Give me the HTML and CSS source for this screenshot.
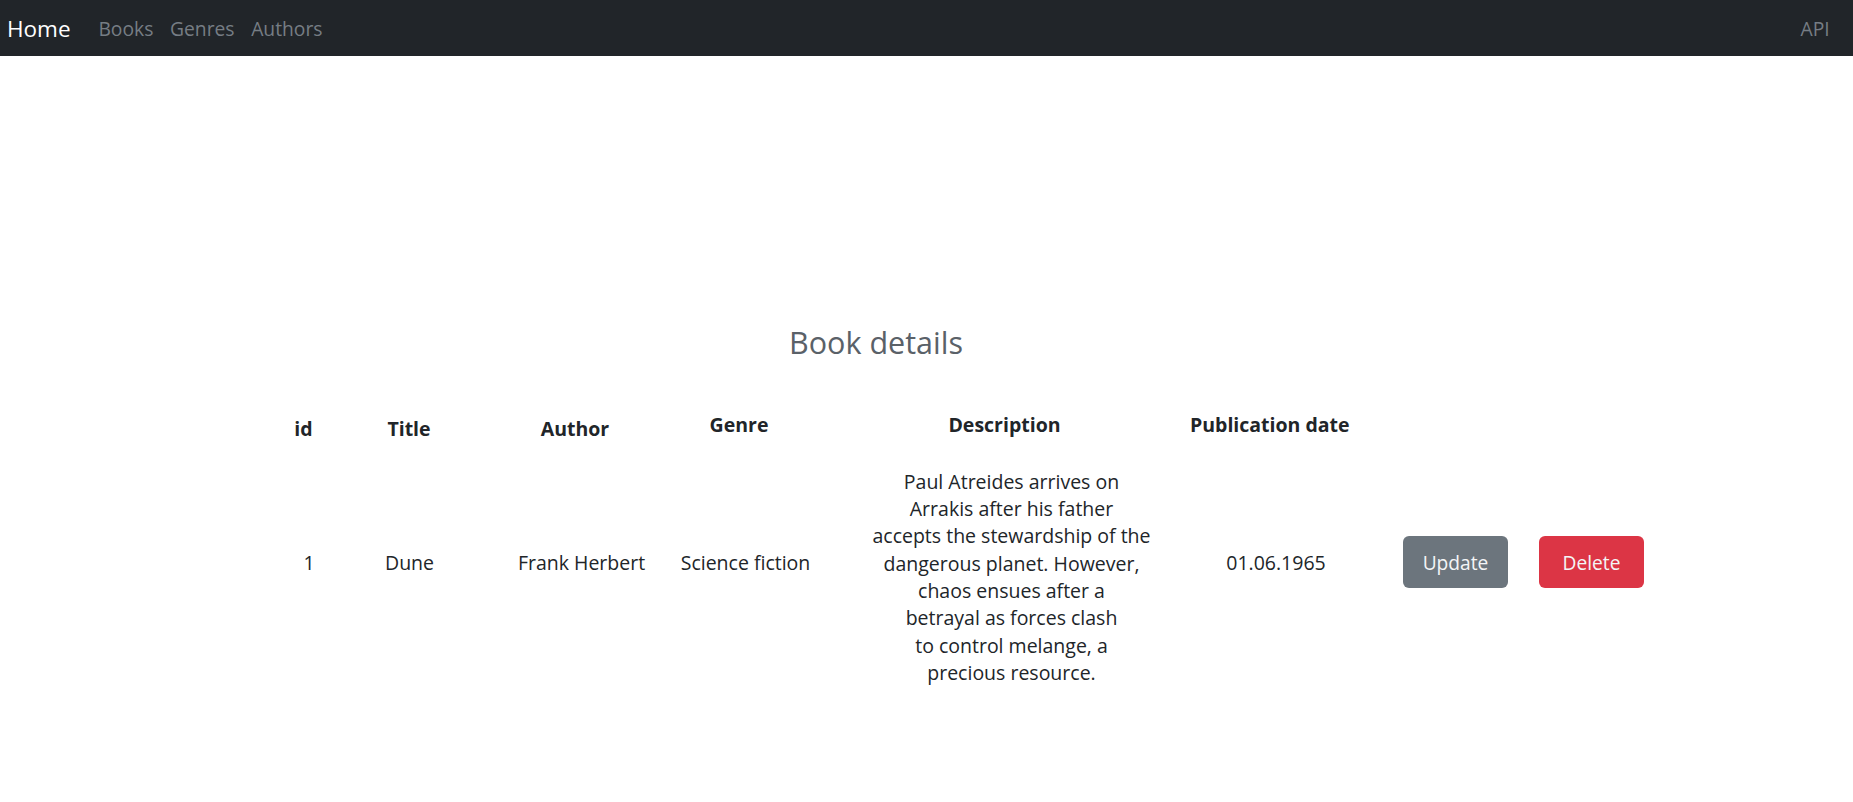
FILE: index.html
```html
<!DOCTYPE html>
<html lang="en">
<head>
<meta charset="utf-8">
<title>Book details</title>
<link rel="stylesheet" href="styles.css">
</head>
<body>
<nav class="navbar">
  <a class="brand" href="#">Home</a>
  <ul class="nav">
    <li><a class="nav-link" href="#">Books</a></li>
    <li><a class="nav-link" href="#">Genres</a></li>
    <li><a class="nav-link" href="#">Authors</a></li>
  </ul>
  <ul class="nav nav-right">
    <li><a class="nav-link" href="#">API</a></li>
  </ul>
</nav>
<main class="page-main">
  <section class="details">
    <h3 class="title">Book details</h3>
    <div class="head-row">
      <div class="th th-low">id</div>
      <div class="th th-low">Title</div>
      <div class="th th-low">Author</div>
      <div class="th">Genre</div>
      <div class="th">Description</div>
      <div class="th">Publication date</div>
    </div>
    <div class="data-row">
      <div class="td">1</div>
      <div class="td">Dune</div>
      <div class="td">Frank Herbert</div>
      <div class="td">Science fiction</div>
      <div class="td td-desc">Paul Atreides arrives on<br>Arrakis after his father<br>accepts the stewardship of the<br>dangerous planet. However,<br>chaos ensues after a<br>betrayal as forces clash<br>to control melange, a<br>precious resource.</div>
      <div class="td">01.06.1965</div>
      <div class="td-actions">
        <button class="btn btn-secondary" type="button">Update</button>
        <button class="btn btn-danger" type="button">Delete</button>
      </div>
    </div>
  </section>
</main>
</body>
</html>
```

FILE: styles.css
```css
* { box-sizing: border-box; }

html, body {
  margin: 0;
  padding: 0;
  background: #ffffff;
}

body {
  font-family: "Open Sans", "Noto Sans", sans-serif;
  color: #212529;
}

.navbar {
  display: flex;
  align-items: center;
  height: 56px;
  background: #212529;
  padding: 2px 15px 0 7px;
}

.brand {
  font-size: 22.5px;
  line-height: 1.5;
  color: #ffffff;
  text-decoration: none;
  margin-right: 19.5px;
}

.nav {
  display: flex;
  list-style: none;
  margin: 0;
  padding: 0;
}

.nav-right {
  margin-left: auto;
}

.nav-link {
  display: block;
  font-size: 19.3px;
  line-height: 1.5;
  padding: 0 8.3px;
  color: #767d84;
  text-decoration: none;
}

.page-main {
  padding-top: 268px;
}

.details {
  margin-left: 280px;
}

.title {
  width: 1192px;
  margin: 0;
  text-align: center;
  font-size: 30.5px;
  line-height: 36.6px;
  font-weight: 400;
  color: #5a6168;
}

.head-row {
  display: grid;
  grid-template-columns: 47px 164px 168px 160px 371px 157px;
  align-items: start;
  margin-top: 52px;
  height: 26.2px;
}

.th {
  text-align: center;
  font-size: 19.5px;
  line-height: 23.4px;
  font-weight: 700;
  white-space: nowrap;
  color: #212529;
}

.th-low {
  padding-top: 4px;
}

.data-row {
  display: grid;
  grid-template-columns: 38px 163px 181px 147px 385px 144px auto;
  align-items: center;
  padding-left: 10px;
}

.td {
  text-align: center;
  font-size: 19.5px;
  line-height: 27.3px;
  white-space: nowrap;
}

.td-desc {
  padding-top: 29px;
}

.td-actions {
  display: flex;
  gap: 31px;
  padding-left: 55px;
}

.btn {
  width: 105px;
  height: 52px;
  border: 0;
  border-radius: 6px;
  font-family: "Open Sans", "Noto Sans", sans-serif;
  font-size: 19.2px;
  color: #f4f5f7;
  cursor: pointer;
  padding: 0;
}

.btn-secondary {
  background: #6c757d;
}

.btn-danger {
  background: #dc3545;
}
```
